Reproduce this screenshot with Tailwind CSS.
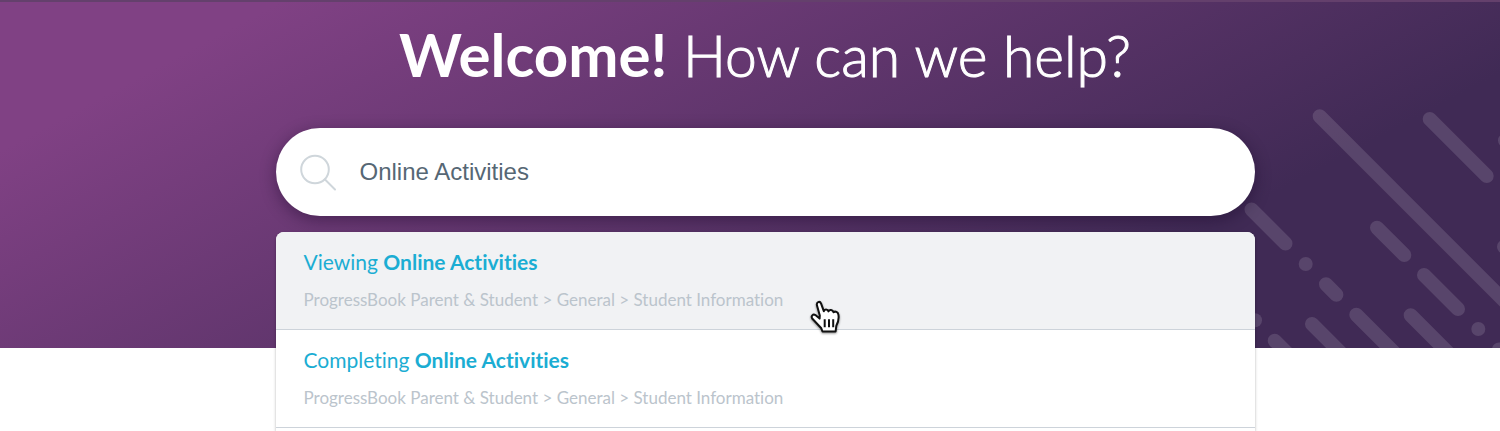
<!DOCTYPE html>
<html lang="en">
<head>
<meta charset="utf-8">
<meta name="viewport" content="width=device-width, initial-scale=1">
<title>Help Center</title>
<script src="https://cdn.jsdelivr.net/npm/@tailwindcss/browser@4"></script>
</head>
<body class="min-h-screen bg-white font-['Lato',sans-serif]">
<header class="relative border-t-2 border-[#64406c] bg-[linear-gradient(152deg,#804184_13%,#402a55_76%)] pt-[22px] pr-4 pb-[132px] pl-[46px]">
  <svg class="absolute right-0 bottom-0" width="260" height="248" viewBox="0 0 260 248" fill="none" stroke="#fff" stroke-opacity=".13" stroke-width="14" stroke-linecap="round" aria-hidden="true">
    <path d="M79.7 16.3 280 216.6"/>
    <path d="M189.7 19l57 57"/>
    <path d="M11.5 109.5l34 34"/>
    <path d="M65.7 164h.01"/>
    <path d="M86 184.3l10.4 10.4"/>
    <path d="M137 127.7l27.3 27.3"/>
    <path d="M184 175l34 34"/>
    <path d="M238.3 229h.01"/>
    <path d="M116.3 214.7l60 60"/>
    <path d="M170.7 215.3l60 60"/>
    <path d="M72 224l50 50"/>
    <path d="M34.7 240.7l40 40"/>
    <path d="M15 220.3h.01"/>
    <path d="M265 40.5l30 30"/>
    <path d="M264 146.7l30 30"/>
    <path d="M259 249.5l20 20"/>
  </svg>

  <h1 class="relative text-center text-[57px] leading-[60px] font-light text-white"><strong class="text-[60px] font-bold">Welcome!</strong> <span class="[-webkit-text-stroke:1px_white]">How can we help?</span></h1>

  <form role="search" class="relative mx-auto mt-[43px] max-w-[979px]" onsubmit="return false">
    <label for="q" class="flex h-[88px] items-center rounded-full bg-white pr-10 pl-6 shadow-[0_4px_16px_rgba(20,5,35,0.4)]">
      <svg class="shrink-0" width="36" height="38" viewBox="0 0 36 38" fill="none" stroke="#cfd6db" stroke-width="2" stroke-linecap="round" aria-hidden="true">
        <circle cx="15" cy="16.5" r="13.8"/>
        <path d="M25 26.5 35 36.5"/>
      </svg>
      <input id="q" type="text" value="Online Activities" aria-label="Search" autocomplete="off" class="ml-6 h-12 min-w-0 flex-1 bg-transparent font-['Liberation_Sans',Arial,sans-serif] text-2xl text-[#566774] outline-none">
    </label>

    <ul class="absolute inset-x-0 top-full mt-4 rounded-t-lg bg-white pb-[3px] shadow-[0_1px_3px_rgba(0,0,0,0.3)]">
      <li class="rounded-t-lg border-b border-[#cdd3da] bg-[#f1f2f4]">
        <a href="#viewing" class="block px-7 pt-4 pb-[17px]">
          <span class="block text-[21px] leading-7 text-[#1badd3] [font-variant-ligatures:none]">Viewing <b class="font-bold">Online Activities</b></span>
          <span class="mt-3 block text-[17px] leading-6 text-[#bbc4cc] [font-variant-ligatures:none]">ProgressBook Parent &amp; Student &gt; General &gt; Student Information</span>
        </a>
      </li>
      <li class="border-b border-[#cdd3da]">
        <a href="#completing" class="block px-7 pt-4 pb-[17px]">
          <span class="block text-[21px] leading-7 text-[#1badd3] [font-variant-ligatures:none]">Completing <b class="font-bold">Online Activities</b></span>
          <span class="mt-3 block text-[17px] leading-6 text-[#bbc4cc] [font-variant-ligatures:none]">ProgressBook Parent &amp; Student &gt; General &gt; Student Information</span>
        </a>
      </li>
    </ul>

    <svg class="absolute top-[171px] left-[533px] drop-shadow-[0_1px_1px_rgba(0,0,0,0.45)]" width="32" height="36" viewBox="0 0 32 36" fill="#fff" stroke="#111" stroke-width="2" stroke-linejoin="round" stroke-linecap="round" aria-hidden="true">
      <path d="M10.8 16.5 8 6.5C7.1 3 10.8 1.6 12.1 4.6L14.8 12.2C15.2 10 18.7 9.8 19.5 12.4 20.4 10.2 23.8 10.5 24.5 13.3 26.2 11.8 29 13 29.4 15.6 30 19 29.4 23 27.3 26.8L26.6 32.5H13.5L12.3 29.3 3.4 19.8C1.4 17 4.2 14.6 6.4 16.1L10.6 19.6Z"/>
      <path d="M15.7 20.3v8M20 20.3v8M24.2 20.3v8" stroke-linecap="butt"/>
    </svg>
  </form>
</header>
</body>
</html>
